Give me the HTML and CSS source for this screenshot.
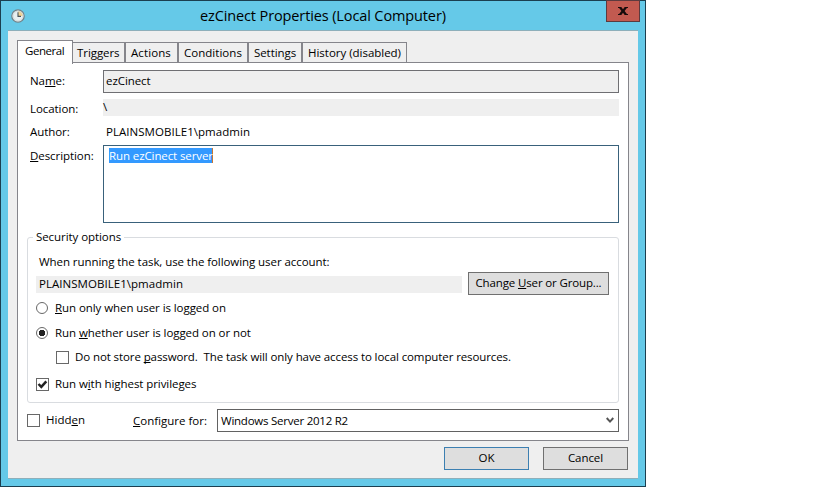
FILE: index.html
```
<!DOCTYPE html>
<html lang="en">
<head>
<meta charset="utf-8">
<title>ezCinect Properties (Local Computer)</title>
<link rel="stylesheet" href="styles.css">
</head>
<body>
<div class="window">
  <header class="titlebar">
    <svg class="clock" width="14" height="14" viewBox="0 0 14 14"><circle cx="7" cy="7" r="6.2" fill="#e9eff0" stroke="#6f7f86" stroke-width="1.2"/><path d="M7 7V2a5 5 0 0 1 5 5z" fill="#f1d296"/><circle cx="7" cy="7" r="4.9" fill="none" stroke="#c9d2d4" stroke-width=".7"/><path d="M7 3.2V7.4H10" fill="none" stroke="#48545c" stroke-width="1.1"/></svg>
    <h1 class="title">ezCinect Properties (Local Computer)</h1>
    <div class="close"><svg width="10" height="8" viewBox="0 0 10 8"><path d="M0 0h3.3L5 2.2 6.7 0H10v1H8.9L6.6 4 8.9 7H10v1H6.7L5 5.8 3.3 8H0V7h1.1l2.3-3L1.1 1H0z" fill="#160b0b"/></svg></div>
  </header>
  <main class="body">
    <nav class="tabs">
      <div class="tab active t-general">General</div>
      <div class="tab t-triggers">Triggers</div>
      <div class="tab t-actions">Actions</div>
      <div class="tab t-conditions">Conditions</div>
      <div class="tab t-settings">Settings</div>
      <div class="tab t-history">History (disabled)</div>
    </nav>
    <section class="panel">
      <div class="fields">
        <label>Na<u>m</u>e:</label><div class="input">ezCinect</div>
        <label>Location:</label><div class="readonly">\</div>
        <label>Author:</label><div class="author">PLAINSMOBILE1\pmadmin</div>
        <label><u>D</u>escription:</label><div class="textarea"><span class="selected">Run ezCinect server</span></div>
      </div>
      <fieldset class="group">
        <legend>Security options</legend>
        <p class="hint">When running the task, use the following user account:</p>
        <div class="account"><div class="account-name">PLAINSMOBILE1\pmadmin</div><div class="button change">Change <u>U</u>ser or Group...</div></div>
        <div class="option only"><span class="radio"></span><span><u>R</u>un only when user is logged on</span></div>
        <div class="option whether"><span class="radio on"></span><span>Run <u>w</u>hether user is logged on or not</span></div>
        <div class="option store"><span class="check"></span><span class="store-text">Do not store <u>p</u>assword.&nbsp; The task will only have access to local computer resources.</span></div>
        <div class="option highest"><span class="check"><svg width="11" height="11" viewBox="0 0 11 11"><path d="M1.5 5 4.3 7.9 9.3 2.3" fill="none" stroke="#222" stroke-width="2.5"/></svg></span><span>Run w<u>i</u>th highest privileges</span></div>
      </fieldset>
      <div class="bottom">
        <div class="option hidden"><span class="check"></span><span>Hidd<u>e</u>n</span></div>
        <label class="configure"><u>C</u>onfigure for:</label>
        <div class="select"><span>Windows Server 2012 R2</span><svg width="8" height="7" viewBox="0 0 8 7"><path d="M.7 1 4 4.6 7.3 1" fill="none" stroke="#555" stroke-width="2"/></svg></div>
      </div>
    </section>
    <footer class="actions"><div class="button ok">OK</div><div class="button">Cancel</div></footer>
  </main>
</div>
</body>
</html>
```
FILE: styles.css
```
* { box-sizing: border-box; }
body {
  margin: 0;
  background: #fff;
  color: #000;
  font: 11.5px/16px "Open Sans", sans-serif;
  letter-spacing: -0.07px;
  white-space: nowrap;
}
u { text-decoration-thickness: 1px; text-underline-offset: 1px; text-decoration-skip-ink: none; }
.window {
  width: 646px;
  height: 487px;
  padding: 0 7px 7px;
  background: #65c9e8;
  border: 1px solid #1b3f50;
}
.titlebar { display: flex; height: 29px; padding-left: 3px; }
.clock { margin-top: 8px; }
.title {
  width: 247px;
  margin: 5px 0 0 175px;
  font-size: 14.5px;
  font-weight: 400;
  line-height: 20px;
  letter-spacing: -0.12px;
}
.close {
  display: flex;
  align-items: center;
  justify-content: center;
  width: 34px;
  height: 22px;
  margin: -1px -2px 0 auto;
  background: #c25a50;
  border: 1px solid #5c3a3e;
}
.body {
  height: 449px;
  padding: 9px 9px 0;
  background: #efefef;
  border-top: 1px solid #8eafba;
  border-bottom: 1px solid #8eafba;
}
.tabs { display: flex; align-items: flex-end; height: 22px; }
.tab {
  height: 21px;
  margin-bottom: -1px;
  padding: 2px 0 0 4px;
  border: 1px solid #85858b;
  background: #efefef;
}
.active {
  position: relative;
  height: 24px;
  margin-bottom: -2px;
  background: #fff;
  border-bottom: 0;
}
.t-general { width: 56px; padding-left: 7px; letter-spacing: -0.45px; }
.t-triggers { width: 52px; border-left: 0; }
.t-actions { width: 53px; padding-left: 5px; letter-spacing: 0.1px; }
.t-conditions { width: 70px; padding-left: 5px; letter-spacing: 0.03px; }
.t-settings { width: 54px; padding-left: 5px; }
.t-history { width: 105px; padding-left: 5px; letter-spacing: -0.02px; }
.panel {
  height: 379px;
  padding: 7px 9px 0;
  background: #fff;
  border: 1px solid #85858b;
}
.fields {
  display: grid;
  grid-template-columns: 73px 516px;
  grid-template-rows: 23px 17px 17px 78px;
  row-gap: 6px;
  padding-left: 3px;
}
.fields label { padding-top: 3px; }
.fields label:nth-of-type(2) { padding-top: 2px; }
.fields label:nth-of-type(3) { padding-top: 2px; }
.input { padding: 2px 0 0 2px; background: #efefef; border: 1px solid #6f6f73; }
.readonly { background: #efefef; }
.author { padding: 2px 0 0 3px; letter-spacing: 0.04px; }
.textarea { padding: 2px 0 0 5px; border: 1px solid #39617b; }
.selected {
  display: block;
  width: 104px;
  height: 15px;
  color: #fff;
  background: #3399ff;
  border-right: 1px solid #c87533;
  line-height: 15px;
  letter-spacing: -0.1px;
}
.group {
  height: 174px;
  margin: 6px 0 0;
  padding: 9px 0 0 8px;
  border: 1px solid #d9dce0;
  border-radius: 3px;
}
.group legend { margin-left: -3px; padding: 0 3px; }
.hint { margin: 0 0 0 3px; }
.account { display: flex; align-items: center; margin-top: 2px; }
.account-name { width: 426px; height: 17px; margin: 2px 6px 0 0; padding-left: 3px; background: #efefef; letter-spacing: 0.04px; }
.button {
  width: 85px;
  height: 23px;
  padding-top: 2px;
  text-align: center;
  background: #dedede;
  border: 1px solid #707070;
}
.change { width: 141px; letter-spacing: -0.14px; }
.option { display: flex; align-items: center; height: 16px; }
.radio {
  width: 12px;
  height: 12px;
  margin-right: 7px;
  border: 1px solid #686868;
  border-radius: 50%;
}
.on { background: radial-gradient(circle, #222 3px, #fff 3.5px); }
.check { width: 13px; height: 13px; margin-right: 6px; border: 1px solid #686868; }
.check svg { display: block; }
.only { margin-top: 5px; }
.whether { margin-top: 9px; }
.store { margin: 8px 0 0 20px; }
.store-text { letter-spacing: -0.1px; }
.highest { margin-top: 11px; }
.bottom { display: flex; height: 23px; margin-top: 6px; }
.hidden { width: 106px; margin-top: 3px; letter-spacing: 0; }
.configure { width: 84px; padding-top: 4px; letter-spacing: 0; }
.select {
  display: flex;
  align-items: center;
  justify-content: space-between;
  width: 402px;
  padding: 0 4px 0 3px;
  border: 1px solid #626262;
  letter-spacing: -0.24px;
}
.actions { display: flex; justify-content: flex-end; gap: 14px; padding: 6px 1px 0 0; }
.ok { border-color: #3c7fb1; }
```
